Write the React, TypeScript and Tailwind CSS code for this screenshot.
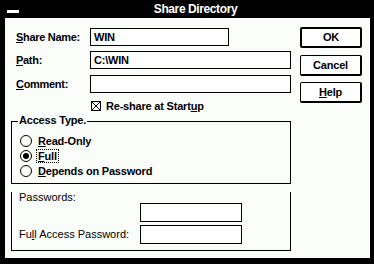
import React from 'react';

const font = "font-['Liberation_Sans',Arial,sans-serif]";

const TextBox = ({ width, value }: { width: string; value?: string }) => (
  <div className={`${width} h-[18px] border border-black bg-white pl-[3px] text-[11px] leading-[16px] font-bold tracking-[-0.2px]`}>
    {value}
  </div>
);

const Radio = ({ checked, children }: { checked?: boolean; children: React.ReactNode }) => (
  <div className="flex h-[12px] items-center">
    <div className="ml-[8px] flex h-[12px] w-[12px] items-center justify-center rounded-full border border-black bg-white">
      {checked && <div className="h-[6px] w-[6px] rounded-full bg-black" />}
    </div>
    <span
      className={`ml-[4px] px-[1px] text-[11px] leading-[12px] font-bold tracking-[-0.2px] ${
        checked ? 'border border-dotted border-black' : 'border border-transparent'
      }`}
    >
      {children}
    </span>
  </div>
);

const Button = ({ children, isDefault }: { children: React.ReactNode; isDefault?: boolean }) => (
  <div
    className={`flex h-[21px] w-[62px] items-center justify-center rounded-[2px] border-black bg-white text-[11px] font-bold tracking-[-0.2px] ${
      isDefault ? 'border-2' : 'border-t border-l border-r-2 border-b-2'
    }`}
  >
    {children}
  </div>
);

export default function App() {
  return (
    <div className={`${font} h-[264px] w-[374px] bg-black pr-[4px] pb-[6px] pl-[5px] text-black`}>
      {/* title bar */}
      <div className="-ml-[5px] -mr-[4px] flex h-[18px] items-start">
        <div className="mt-[10px] ml-[7px] h-[3px] w-[12px] bg-white" />
        <div className="flex-1 pr-[2px] text-center text-[12px] leading-[18px] font-bold tracking-[-0.4px] text-white">
          Share Directory
        </div>
      </div>

      <div className="flex h-[240px] bg-[#fbfdfb]">
        <div className="flex w-[286px] flex-col">
          <div className="mt-[10px] flex h-[18px] items-center">
            <span className="w-[85px] pl-[11px] text-[11px] font-bold tracking-[-0.3px]">
              <u>S</u>hare Name:
            </span>
            <TextBox width="w-[139px]" value="WIN" />
          </div>
          <div className="mt-[5px] flex h-[18px] items-center">
            <span className="w-[85px] pl-[11px] text-[11px] font-bold tracking-[-0.3px]">
              <u>P</u>ath:
            </span>
            <TextBox width="w-[201px]" value="C:\WIN" />
          </div>
          <div className="mt-[6px] flex h-[18px] items-center">
            <span className="w-[85px] pl-[11px] text-[11px] font-bold tracking-[-0.3px]">
              <u>C</u>omment:
            </span>
            <TextBox width="w-[201px]" />
          </div>
          <div className="mt-[7px] flex h-[12px] items-center pl-[86px]">
            <svg width="10" height="10" viewBox="0 0 10 10" className="shrink-0">
              <rect x="0.5" y="0.5" width="9" height="9" fill="white" stroke="black" />
              <path d="M1 1 L9 9 M9 1 L1 9" stroke="black" strokeWidth="1" />
            </svg>
            <span className="ml-[5px] text-[11px] font-bold tracking-[-0.2px]">
              Re-share at Start<u>u</u>p
            </span>
          </div>

          {/* access type group */}
          <div className="relative mt-[9px] ml-[6px] h-[63px] w-[280px] border border-black">
            <span className="absolute -top-[8px] left-[6px] bg-[#fbfdfb] px-[1px] text-[11px] leading-[13px] font-bold tracking-[-0.2px]">
              Access Type.
            </span>
            <div className="flex flex-col gap-[3px] pt-[13px]">
              <Radio>
                <u>R</u>ead-Only
              </Radio>
              <Radio checked>
                <u>F</u>ull
              </Radio>
              <Radio>
                <u>D</u>epends on Password
              </Radio>
            </div>
          </div>

          {/* passwords frame */}
          <div className="mt-[8px] ml-[6px] flex h-[59px] w-[280px] flex-col border-r border-b border-l border-black">
            <div className="h-[11px] pl-[7px] text-[11px] leading-[11px]">Passwords:</div>
            <div className="flex h-[19px] items-center">
              <div className="w-[128px]" />
              <div className="h-[19px] w-[102px] border border-black bg-white" />
            </div>
            <div className="mt-[3px] flex h-[19px] items-center">
              <span className="w-[128px] pl-[7px] text-[11px]">
                Fu<u>l</u>l Access Password:
              </span>
              <div className="h-[19px] w-[102px] border border-black bg-white" />
            </div>
          </div>
        </div>

        {/* buttons */}
        <div className="ml-[9px] flex flex-col">
          <div className="mt-[9px]">
            <Button isDefault>OK</Button>
          </div>
          <div className="mt-[7px]">
            <Button>Cancel</Button>
          </div>
          <div className="mt-[6px]">
            <Button>
              <u>H</u>elp
            </Button>
          </div>
        </div>
      </div>
    </div>
  );
}
